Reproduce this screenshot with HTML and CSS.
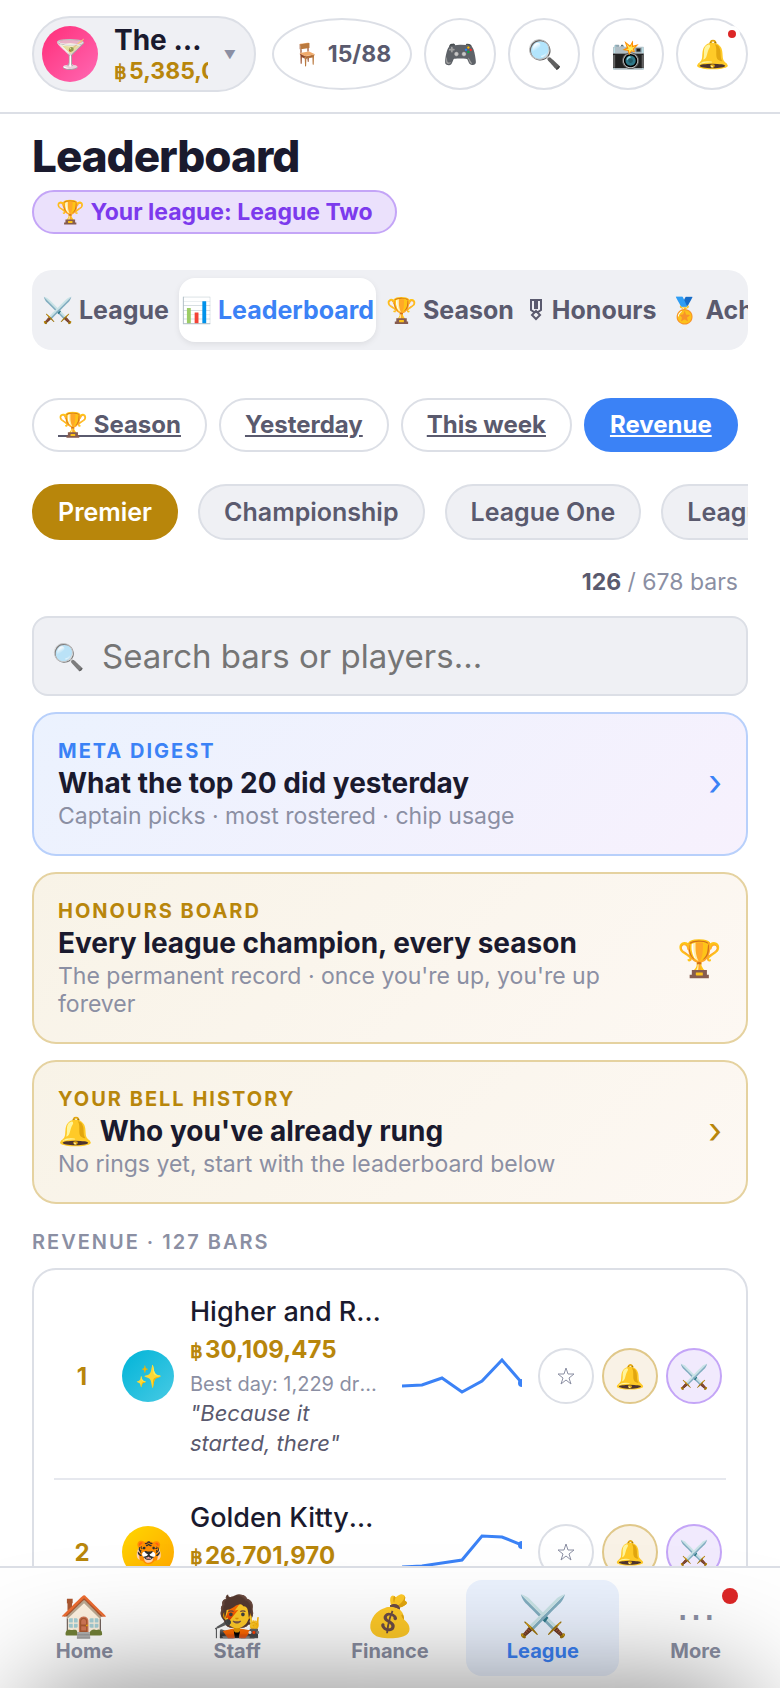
FILE: index.html
```html
<!DOCTYPE html>
<html lang="en">
<head>
    <meta charset="UTF-8">
    <meta name="viewport" content="width=device-width, initial-scale=1.0">
    <title>Leaderboard</title>
    <link rel="stylesheet" href="styles.css">
</head>
<body>
    <!-- Header -->
    <header class="topbar">
        <button class="profile" type="button">
            <span class="profile-avatar">🍸</span>
            <span class="profile-info">
                <span class="profile-name">The Tipsy Bar</span>
                <span class="profile-cash"><span class="baht">฿</span>5,385,000</span>
            </span>
            <span class="profile-arrow">▼</span>
        </button>
        <button class="seats" type="button"><span class="seats-icon">🪑</span>15/88</button>
        <button class="icon-btn" type="button" aria-label="Games">🎮</button>
        <button class="icon-btn" type="button" aria-label="Search">🔍</button>
        <button class="icon-btn" type="button" aria-label="Snapshots">📸</button>
        <button class="icon-btn" type="button" aria-label="Notifications">🔔<span class="alert-dot"></span></button>
    </header>

    <main>
        <h1>Leaderboard</h1>
        <a class="league-badge" href="#league">🏆 Your league: League Two</a>

        <!-- Section tabs -->
        <nav class="tabs">
            <button type="button">⚔️ League</button>
            <button type="button" class="active">📊 Leaderboard</button>
            <button type="button">🏆 Season</button>
            <button type="button">
                <svg class="medal" viewBox="0 0 12 22">
                    <path d="M1 1h10v10l-3 2H4l-3-2z"/>
                    <path class="ribbon" d="M6 1v9"/>
                    <path d="M6 12l4 4-4 4-4-4z"/>
                </svg>
                Honours
            </button>
            <button type="button">🏅 Achievements</button>
        </nav>

        <!-- Period filter -->
        <nav class="periods">
            <a href="#season">🏆 Season</a>
            <a href="#yesterday">Yesterday</a>
            <a href="#week">This week</a>
            <a href="#revenue" class="active">Revenue</a>
        </nav>

        <!-- Division filter -->
        <div class="divisions">
            <button type="button" class="active">Premier</button>
            <button type="button">Championship</button>
            <button type="button">League One</button>
            <button type="button">League Two</button>
        </div>

        <p class="count"><strong>126</strong> / 678 bars</p>

        <label class="search">
            <span class="search-icon">🔍</span>
            <input type="text" placeholder="Search bars or players..." aria-label="Search bars or players">
        </label>

        <!-- Promo cards -->
        <a class="card card-blue" href="#digest">
            <span class="card-text">
                <span class="card-label">META DIGEST</span>
                <span class="card-title">What the top 20 did yesterday</span>
                <span class="card-sub">Captain picks · most rostered · chip usage</span>
            </span>
            <span class="card-arrow">›</span>
        </a>
        <a class="card card-gold" href="#honours">
            <span class="card-text">
                <span class="card-label">HONOURS BOARD</span>
                <span class="card-title">Every league champion, every season</span>
                <span class="card-sub">The permanent record · once you're up, you're up forever</span>
            </span>
            <span class="card-trophy">🏆</span>
        </a>
        <a class="card card-gold" href="#bells">
            <span class="card-text">
                <span class="card-label">YOUR BELL HISTORY</span>
                <span class="card-title">🔔 Who you've already rung</span>
                <span class="card-sub">No rings yet, start with the leaderboard below</span>
            </span>
            <span class="card-arrow">›</span>
        </a>

        <h2>REVENUE · 127 BARS</h2>

        <!-- Ranking -->
        <div class="ranking">
            <div class="row">
                <span class="rank">1</span>
                <span class="avatar avatar-cyan">✨</span>
                <div class="bar-info">
                    <div class="bar-name">Higher and Rising</div>
                    <div class="bar-cash"><span class="baht">฿</span>30,109,475</div>
                    <div class="bar-best">Best day: 1,229 drams</div>
                    <div class="bar-quote">"Because it started, there"</div>
                </div>
                <svg class="spark" viewBox="0 0 120 44">
                    <polyline points="0,32 20,31 40,24 60,38 80,27 100,6 120,29"/>
                    <circle cx="120" cy="29" r="4"/>
                </svg>
                <div class="actions">
                    <button type="button" aria-label="Follow">
                        <svg class="star" viewBox="0 0 18 18"><path d="M9 1l2 6h6l-5 4 2 6-5-4-5 4 2-6-5-4h6z"/></svg>
                    </button>
                    <button type="button" class="bell" aria-label="Ring bell">🔔</button>
                    <button type="button" class="duel" aria-label="Challenge">⚔️</button>
                </div>
            </div>
            <div class="row">
                <span class="rank">2</span>
                <span class="avatar avatar-gold">🐯</span>
                <div class="bar-info">
                    <div class="bar-name">Golden KittyWorld</div>
                    <div class="bar-cash"><span class="baht">฿</span>26,701,970</div>
                    <div class="bar-best">Best day: 1,104 drams</div>
                </div>
                <svg class="spark" viewBox="0 0 120 44">
                    <polyline points="0,37 20,36 40,33 60,30 80,6 100,7 120,15"/>
                    <circle cx="120" cy="15" r="4"/>
                </svg>
                <div class="actions">
                    <button type="button" aria-label="Follow">
                        <svg class="star" viewBox="0 0 18 18"><path d="M9 1l2 6h6l-5 4 2 6-5-4-5 4 2-6-5-4h6z"/></svg>
                    </button>
                    <button type="button" class="bell" aria-label="Ring bell">🔔</button>
                    <button type="button" class="duel" aria-label="Challenge">⚔️</button>
                </div>
            </div>
        </div>
    </main>

    <!-- Bottom navigation -->
    <nav class="bottom-nav">
        <a href="#home"><span class="nav-icon">🏠</span>Home</a>
        <a href="#staff"><span class="nav-icon">🧑‍🎤</span>Staff</a>
        <a href="#finance"><span class="nav-icon">💰</span>Finance</a>
        <a href="#league" class="active"><span class="nav-icon">⚔️</span>League</a>
        <a href="#more"><span class="nav-icon">⋯</span>More<span class="nav-dot"></span></a>
    </nav>

    <!-- Closed sheet, only its shadow shows -->
    <div class="sheet"></div>
</body>
</html>
```
FILE: styles.css
```css
* {
    box-sizing: border-box;
}

body {
    margin: 0;
    height: 100vh;
    overflow: hidden;
    background: #ffffff;
    color: #1a1a2e;
    font-family: Inter, "Liberation Sans", sans-serif;
}

button,
input {
    font-family: inherit;
    margin: 0;
}

button {
    cursor: pointer;
    padding: 0;
}

a {
    color: inherit;
    text-decoration: none;
}

.baht {
    margin-right: 2px;
    font-family: "Liberation Sans", sans-serif;
    font-size: 20px;
}

/* Header */
.topbar {
    display: flex;
    align-items: flex-start;
    gap: 12px;
    padding: 16px 32px 20px;
    border-bottom: 2px solid #dcdfe6;
}

.profile {
    display: flex;
    align-items: center;
    width: 224px;
    height: 76px;
    margin-right: 4px;
    padding: 0 18px 0 8px;
    border: 2px solid #dcdfe6;
    border-radius: 38px;
    background: #eff0f4;
    text-align: left;
}

.profile-avatar {
    display: flex;
    flex-shrink: 0;
    align-items: center;
    justify-content: center;
    width: 56px;
    height: 56px;
    border-radius: 50%;
    background: linear-gradient(135deg, #ff2d78, #ff69b4);
    font-size: 28px;
}

.profile-info {
    flex: 1;
    min-width: 0;
    margin: 0 16px;
}

.profile-name,
.profile-cash {
    display: block;
    overflow: hidden;
    white-space: nowrap;
}

.profile-name {
    color: #1a1a2e;
    font-size: 28px;
    font-weight: 700;
    line-height: 34px;
    text-overflow: ellipsis;
}

.profile-cash {
    color: #b8860b;
    font-size: 23px;
    font-weight: 700;
    line-height: 28px;
}

.profile-arrow {
    color: #8b8fa3;
    font-size: 12px;
}

.seats,
.icon-btn {
    position: relative;
    flex-shrink: 0;
    height: 72px;
    margin-top: 2px;
    border: 2px solid #dcdfe6;
    border-radius: 50%;
    background: #ffffff;
}

.seats {
    width: 140px;
    color: #5a5a6e;
    font-size: 23px;
    font-weight: 700;
}

.seats-icon {
    margin-right: 8px;
    font-size: 22px;
}

.icon-btn {
    width: 72px;
    font-size: 28px;
}

.alert-dot {
    position: absolute;
    top: 6px;
    right: 6px;
    width: 16px;
    height: 16px;
    border: 4px solid #ffffff;
    border-radius: 50%;
    background: #dc2626;
}

/* Page content */
main {
    padding: 16px 32px 0;
}

h1 {
    margin: 0;
    font-size: 44px;
    font-weight: 800;
    line-height: 52px;
    letter-spacing: -1px;
}

.league-badge {
    display: inline-block;
    margin-top: 8px;
    padding: 0 22px;
    border: 2px solid #c4a5f7;
    border-radius: 22px;
    background: #ebe1fc;
    color: #7c3aed;
    font-size: 23px;
    font-weight: 700;
    line-height: 40px;
}

/* Section tabs */
.tabs {
    display: flex;
    gap: 8px;
    height: 80px;
    margin-top: 36px;
    padding: 8px;
    border-radius: 20px;
    background: #eff0f4;
    overflow: hidden;
}

.tabs button {
    flex-shrink: 0;
    padding: 0 2px;
    border: none;
    border-radius: 16px;
    background: none;
    color: #5a5a6e;
    font-size: 25px;
    font-weight: 700;
    white-space: nowrap;
}

.tabs .active {
    background: #ffffff;
    color: #3b82f6;
    box-shadow: 0 2px 6px rgba(0, 0, 0, 0.08);
}

.medal {
    width: 12px;
    height: 22px;
    margin: 0 4px;
    vertical-align: -2px;
    fill: none;
    stroke: #5a5a6e;
    stroke-width: 2;
}

.medal .ribbon {
    stroke-width: 4;
}

/* Period filter */
.periods {
    display: flex;
    gap: 12px;
    margin-top: 48px;
}

.periods a {
    padding: 0 24px;
    border: 2px solid #dcdfe6;
    border-radius: 27px;
    color: #5a5a6e;
    font-size: 24px;
    font-weight: 700;
    line-height: 50px;
    text-decoration: underline;
    white-space: nowrap;
}

.periods .active {
    border-color: #3b82f6;
    background: #3b82f6;
    color: #ffffff;
}

/* Division filter */
.divisions {
    display: flex;
    gap: 20px;
    margin-top: 32px;
    overflow: hidden;
}

.divisions button {
    flex-shrink: 0;
    height: 56px;
    padding: 0 24px;
    border: 2px solid #dcdfe6;
    border-radius: 28px;
    background: #eff0f4;
    color: #5a5a6e;
    font-size: 25px;
    font-weight: 600;
}

.divisions .active {
    border-color: #b8860b;
    background: #b8860b;
    color: #ffffff;
}

.count {
    margin: 28px 10px 20px;
    color: #8b8fa3;
    font-size: 23px;
    line-height: 28px;
    text-align: right;
}

.count strong {
    color: #5a5a6e;
    font-weight: 700;
}

/* Search */
.search {
    display: flex;
    align-items: center;
    gap: 18px;
    height: 80px;
    padding: 0 18px;
    border: 2px solid #dcdfe6;
    border-radius: 16px;
    background: #eff0f4;
}

.search-icon {
    font-size: 26px;
    opacity: 0.8;
}

.search input {
    flex: 1;
    min-width: 0;
    padding: 0;
    border: none;
    outline: none;
    background: none;
    font-size: 33px;
}

.search input::placeholder {
    color: #757575;
}

/* Promo cards */
.card {
    display: flex;
    align-items: center;
    gap: 24px;
    margin-top: 16px;
    padding: 24px;
    border: 2px solid;
    border-radius: 24px;
}

.card-blue {
    border-color: #b8d0fb;
    background: linear-gradient(135deg, #ebf2fe, #f7f1fd);
}

.card-gold {
    border-color: #e5d2a0;
    background: linear-gradient(135deg, #f8f3e7, #fdf8f3);
}

.card-text {
    flex: 1;
    min-width: 0;
}

.card-label,
.card-title,
.card-sub {
    display: block;
}

.card-label {
    font-size: 20px;
    font-weight: 700;
    line-height: 26px;
    letter-spacing: 2px;
}

.card-title {
    font-size: 28px;
    font-weight: 700;
    line-height: 38px;
}

.card-sub {
    color: #8b8fa3;
    font-size: 23px;
    line-height: 28px;
}

.card-arrow {
    font-size: 36px;
    line-height: 44px;
    padding-bottom: 4px;
}

.card-blue .card-label,
.card-blue .card-arrow {
    color: #3b82f6;
}

.card-gold .card-label,
.card-gold .card-arrow {
    color: #b8860b;
}

.card-trophy {
    font-size: 36px;
    line-height: 44px;
}

h2 {
    margin: 24px 0 12px;
    color: #8b8fa3;
    font-size: 20px;
    font-weight: 600;
    line-height: 28px;
    letter-spacing: 2px;
}

/* Ranking */
.ranking {
    padding: 4px 20px;
    border: 2px solid #dcdfe6;
    border-radius: 24px;
}

.row {
    display: flex;
    align-items: center;
    gap: 16px;
    padding: 20px 4px;
    border-bottom: 2px solid #e6e8ee;
}

.rank {
    width: 48px;
    color: #b8860b;
    font-size: 24px;
    font-weight: 700;
    text-align: center;
}

.avatar {
    display: flex;
    flex-shrink: 0;
    align-items: center;
    justify-content: center;
    width: 52px;
    height: 52px;
    border-radius: 50%;
    font-size: 22px;
}

.avatar-cyan {
    background: linear-gradient(135deg, #00b4d8, #48cae4);
}

.avatar-gold {
    background: linear-gradient(135deg, #ffd700, #ffa500);
}

.bar-info {
    flex: 1;
    min-width: 0;
}

.bar-name,
.bar-best {
    overflow: hidden;
    text-overflow: ellipsis;
    white-space: nowrap;
}

.bar-name {
    font-size: 27px;
    font-weight: 500;
    line-height: 36px;
}

.bar-cash {
    height: 40px;
    color: #b8860b;
    font-size: 24px;
    font-weight: 700;
    line-height: 40px;
}

.bar-best {
    color: #8b8fa3;
    font-size: 20px;
    line-height: 28px;
}

.bar-quote {
    color: #5a5a6e;
    font-size: 22px;
    font-style: italic;
    line-height: 30px;
}

.spark {
    flex-shrink: 0;
    width: 120px;
    height: 44px;
    overflow: hidden;
}

.spark polyline {
    fill: none;
    stroke: #3b82f6;
    stroke-width: 3;
}

.spark circle {
    fill: #3b82f6;
}

.actions {
    display: flex;
    gap: 8px;
}

.actions button {
    width: 56px;
    height: 56px;
    border: 2px solid #dcdfe6;
    border-radius: 50%;
    background: #ffffff;
    font-size: 24px;
}

.star {
    display: block;
    width: 18px;
    height: 18px;
    margin: 0 auto;
    fill: none;
    stroke: #8b8fa3;
    stroke-width: 1;
}

.actions .bell {
    border-color: #e0c88a;
    background: #f9f2e6;
}

.actions .duel {
    border-color: #c4a5f7;
    background: #f1eafd;
}

/* Bottom navigation */
.bottom-nav {
    position: fixed;
    bottom: 0;
    left: 0;
    right: 0;
    display: flex;
    padding: 12px 8px;
    border-top: 2px solid #dcdfe6;
    background: #ffffff;
}

.bottom-nav a {
    position: relative;
    flex: 1;
    display: flex;
    flex-direction: column;
    align-items: center;
    height: 96px;
    padding-top: 12px;
    border-radius: 16px;
    color: #8b8fa3;
    font-size: 20px;
    font-weight: 700;
    line-height: 22px;
}

.bottom-nav .active {
    background: #ebf2fe;
    color: #3b82f6;
}

.nav-icon {
    font-size: 40px;
    font-weight: 400;
    line-height: 48px;
}

.nav-dot {
    position: absolute;
    top: 8px;
    right: 34px;
    width: 16px;
    height: 16px;
    border-radius: 50%;
    background: #dc2626;
}

.sheet {
    position: fixed;
    top: 100%;
    left: 32px;
    right: 32px;
    height: 200px;
    border-radius: 28px;
    box-shadow: 0 0 120px rgba(0, 0, 0, 0.5);
    pointer-events: none;
}
```
